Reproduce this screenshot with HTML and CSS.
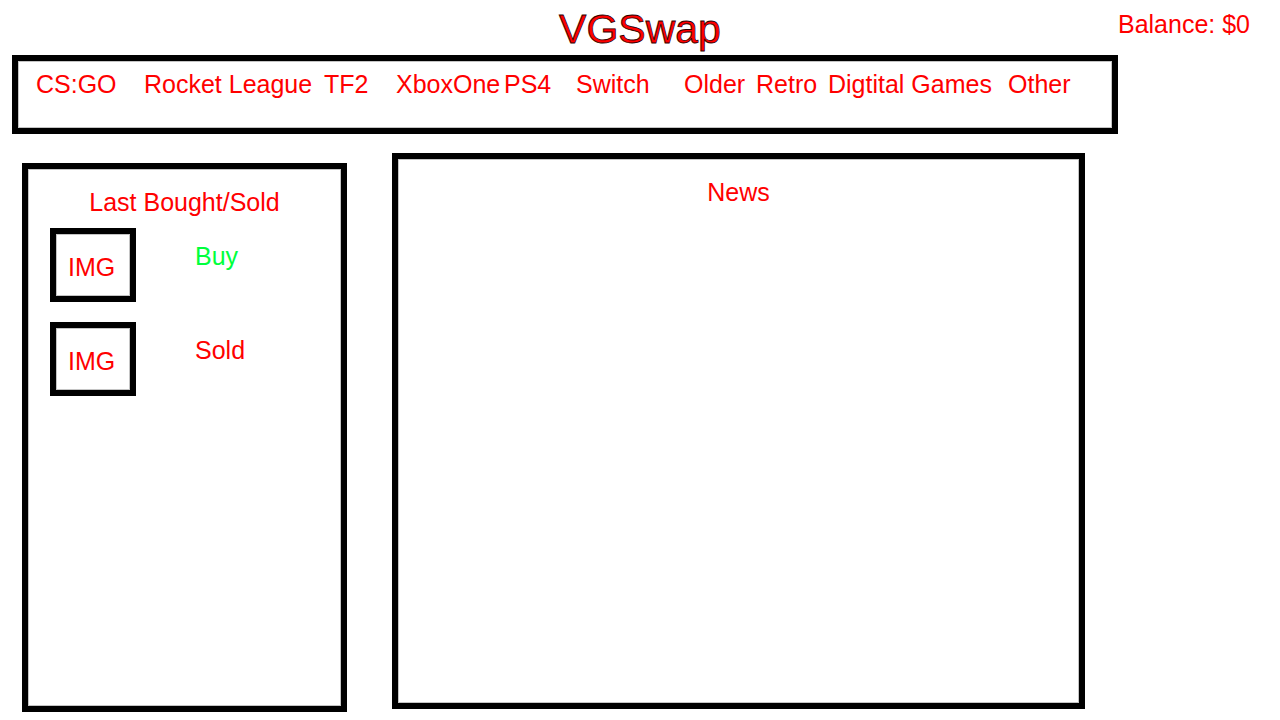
FILE: index.html
```html
<!DOCTYPE html>
<html>
<head>
<meta charset="utf-8">
<title>VGSwap</title>
<link rel="stylesheet" href="styles.css">
</head>
<body>
<header class="top">
  <div class="spacer"></div>
  <h1 class="logo">VGSwap</h1>
  <div class="balance">Balance: $0</div>
</header>
<nav class="nav">
  <a class="nav-item i1">CS:GO</a>
  <a class="nav-item i2">Rocket League</a>
  <a class="nav-item i3">TF2</a>
  <a class="nav-item i4">XboxOne</a>
  <a class="nav-item i5">PS4</a>
  <a class="nav-item i6">Switch</a>
  <a class="nav-item i7">Older</a>
  <a class="nav-item i8">Retro</a>
  <a class="nav-item i9">Digtital Games</a>
  <a class="nav-item i10">Other</a>
</nav>
<main class="main">
  <section class="panel side">
    <h2 class="panel-title">Last Bought/Sold</h2>
    <div class="trade">
      <div class="thumb">IMG</div>
      <div class="trade-label buy">Buy</div>
    </div>
    <div class="trade">
      <div class="thumb">IMG</div>
      <div class="trade-label sold">Sold</div>
    </div>
  </section>
  <section class="panel news">
    <h2 class="panel-title">News</h2>
  </section>
</main>
</body>
</html>
```
FILE: styles.css
```css
* { box-sizing: border-box; }
html, body { margin: 0; padding: 0; background: #fff; }
body {
  font-family: "Liberation Sans", Arial, sans-serif;
  color: #ff0000;
  width: 1280px;
  height: 720px;
  overflow: hidden;
}
.top {
  height: 55px;
  display: grid;
  grid-template-columns: 1fr auto 1fr;
  align-items: start;
}
.logo {
  margin: 0;
  padding-top: 5px;
  font-size: 41px;
  font-weight: normal;
  line-height: 48px;
  color: #ff0000;
  -webkit-text-stroke: 0.8px #2a0000;
}
.balance {
  justify-self: end;
  padding-top: 10px;
  padding-right: 30px;
  font-size: 25px;
  line-height: 28px;
}
.nav {
  margin-left: 12px;
  width: 1106px;
  height: 79px;
  border: 6px solid #000;
  box-shadow: inset 0 0 0 1px #c4c4c4;
  padding: 9px 0 0 18px;
  display: grid;
  grid-template-columns: repeat(30, 36px);
  align-content: start;
  font-size: 25px;
  line-height: 28px;
}
.nav-item { white-space: nowrap; grid-row: 1; }
.i1 { grid-column: 1; }
.i2 { grid-column: 4; }
.i3 { grid-column: 9; }
.i4 { grid-column: 11; }
.i5 { grid-column: 14; }
.i6 { grid-column: 16; }
.i7 { grid-column: 19; }
.i8 { grid-column: 21; }
.i9 { grid-column: 23; }
.i10 { grid-column: 28; }
.main {
  display: flex;
  align-items: flex-start;
  gap: 45px;
  padding-left: 22px;
}
.panel {
  border: 6px solid #000;
  box-shadow: inset 0 0 0 1px #c4c4c4;
  padding-top: 19px;
}
.side {
  margin-top: 29px;
  width: 325px;
  height: 549px;
}
.news {
  margin-top: 19px;
  width: 693px;
  height: 556px;
}
.panel-title {
  margin: 0;
  font-size: 25px;
  font-weight: normal;
  line-height: 28px;
  text-align: center;
}
.trade {
  display: flex;
  align-items: flex-start;
  gap: 59px;
  margin-left: 22px;
  margin-top: 12px;
}
.trade + .trade { margin-top: 20px; }
.thumb {
  width: 86px;
  height: 74px;
  border: 6px solid #000;
  box-shadow: inset 0 0 0 1px #c4c4c4;
  padding: 19px 0 0 12px;
  font-size: 25px;
  line-height: 28px;
}
.trade-label {
  padding-top: 14px;
  font-size: 25px;
  line-height: 28px;
}
.buy { color: #00ff3c; }
.sold { color: #ff0000; }
```
